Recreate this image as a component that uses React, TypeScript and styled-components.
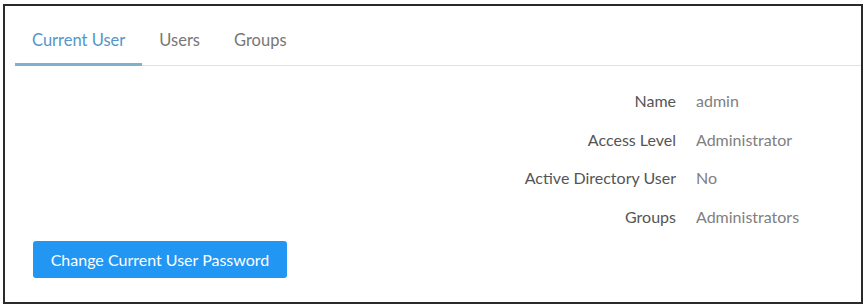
import { Fragment } from 'react';
import styled, { createGlobalStyle } from 'styled-components';

const GlobalStyle = createGlobalStyle`
  html, body {
    margin: 0;
    padding: 0;
    background: #ffffff;
  }
  body {
    font-family: Lato, "Open Sans", Arial, sans-serif;
  }
`;

const Frame = styled.div`
  box-sizing: border-box;
  width: 860px;
  height: 300px;
  margin: 4px 0 0 3px;
  border: 2px solid #2a2a2a;
  background: #ffffff;
  display: flex;
  flex-direction: column;
`;

const TabBar = styled.div`
  display: flex;
  margin-left: 10px;
  border-bottom: 1px solid #e2e2e2;
`;

const Tab = styled.div<{ $active?: boolean }>`
  padding: 24px 17px 13px;
  font-size: 16.5px;
  color: ${(p) => (p.$active ? '#5496c8' : '#777777')};
  border-bottom: 3px solid ${(p) => (p.$active ? '#7fb1cc' : 'transparent')};
  margin-bottom: -1px;
  cursor: pointer;
`;

const Content = styled.div`
  padding: 16px 0 0 28px;
  display: flex;
  flex-direction: column;
`;

const Details = styled.div`
  display: grid;
  grid-template-columns: 1fr 165px;
  column-gap: 18px;
  margin-left: -28px;
`;

const Label = styled.div`
  font-size: 16px;
  color: #555555;
  text-align: right;
  line-height: 38.5px;
  margin-right: 2px;
`;

const Value = styled.div`
  font-size: 16px;
  color: #808080;
  line-height: 38.5px;
`;

const Button = styled.button`
  align-self: flex-start;
  margin-top: 5px;
  width: 254px;
  height: 37px;
  border: none;
  border-radius: 3px;
  background: #2196f3;
  color: #ffffff;
  font-family: Lato, "Open Sans", Arial, sans-serif;
  font-size: 16px;
  cursor: pointer;
`;

const rows = [
  ['Name', 'admin'],
  ['Access Level', 'Administrator'],
  ['Active Directory User', 'No'],
  ['Groups', 'Administrators'],
];

const App = () => {
  return (
    <>
      <GlobalStyle />
      <Frame>
        <TabBar>
          <Tab $active>Current User</Tab>
          <Tab>Users</Tab>
          <Tab>Groups</Tab>
        </TabBar>
        <Content>
          <Details>
            {rows.map(([label, value]) => (
              <Fragment key={label}>
                <Label>{label}</Label>
                <Value>{value}</Value>
              </Fragment>
            ))}
          </Details>
          <Button type="button">Change Current User Password</Button>
        </Content>
      </Frame>
    </>
  );
};

export default App;
